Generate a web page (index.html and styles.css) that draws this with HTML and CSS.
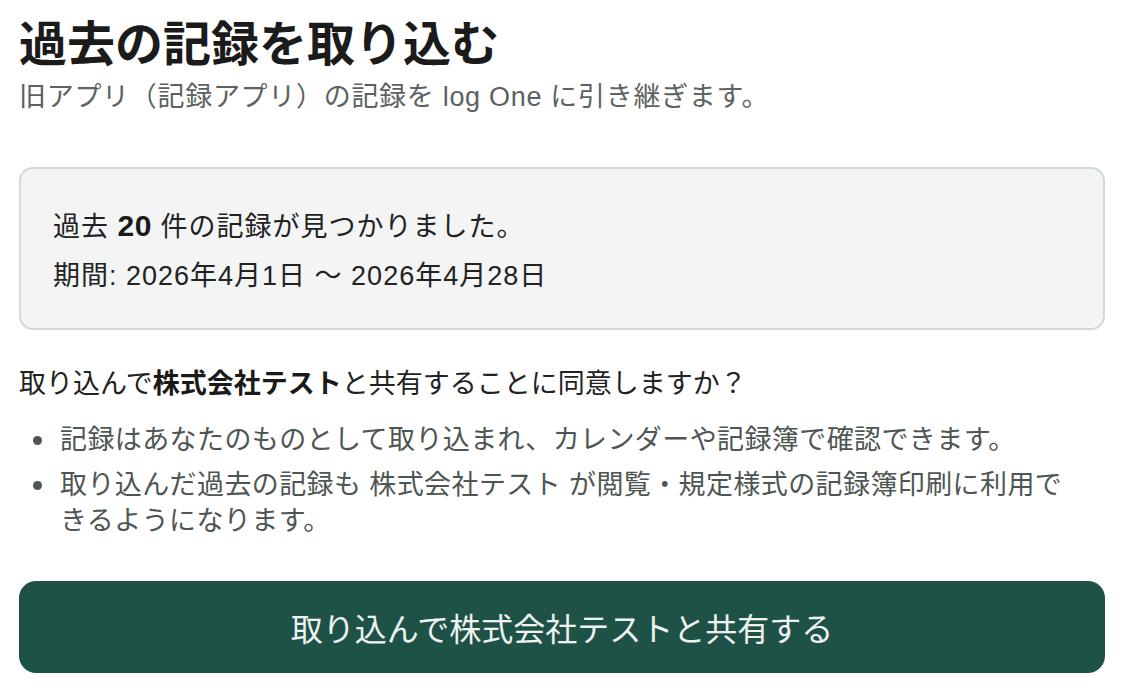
FILE: index.html
```html
<!DOCTYPE html>
<html lang="ja">
<head>
<meta charset="utf-8">
<title>過去の記録を取り込む</title>
<link rel="stylesheet" href="styles.css">
</head>
<body>
<main class="page">
  <h1 class="title">過去の記録を取り込む</h1>
  <p class="subtitle">旧アプリ（記録アプリ）の記録を log One に引き継ぎます。</p>

  <section class="summary">
    <p class="summary-line">過去 <strong class="count">20</strong> 件の記録が見つかりました。</p>
    <p class="summary-line">期間: 2026年4月1日 ～ 2026年4月28日</p>
  </section>

  <p class="question">取り込んで<strong>株式会社テスト</strong>と共有することに同意しますか？</p>

  <ul class="notes">
    <li class="note">記録はあなたのものとして取り込まれ、カレンダーや記録簿で確認できます。</li>
    <li class="note">取り込んだ過去の記録も 株式会社テスト が閲覧・規定様式の記録簿印刷に利用できるようになります。</li>
  </ul>

  <button class="primary" type="button">取り込んで株式会社テストと共有する</button>
</main>
</body>
</html>
```

FILE: styles.css
```css
* { box-sizing: border-box; }

html, body {
  margin: 0;
  padding: 0;
  background: #ffffff;
}

body {
  font-family: "Liberation Sans", "Noto Sans CJK JP", sans-serif;
  color: #222222;
}

.page {
  display: flex;
  flex-direction: column;
  padding: 12px 19px 0 19px;
}

.title {
  margin: 0;
  font-family: "Noto Sans CJK JP", sans-serif;
  font-size: 48px;
  line-height: 56px;
  font-weight: 700;
  color: #1b1b1b;
}

.subtitle {
  margin: 11px 0 0 0;
  font-size: 27px;
  line-height: 36px;
  letter-spacing: 0.7px;
  color: #5b625f;
}

.summary {
  margin-top: 52px;
  background: #f3f5f4;
  border: 2px solid #d2d9d6;
  border-radius: 14px;
  padding: 39px 32px 34px 32px;
  display: flex;
  flex-direction: column;
  gap: 13px;
}

.summary-line {
  margin: 0;
  font-size: 27px;
  line-height: 36px;
  letter-spacing: 1px;
  color: #222222;
}

.count {
  font-weight: 700;
  font-size: 30px;
  letter-spacing: 0.5px;
  color: #1a1a1a;
}

.question {
  margin: 36px 0 0 0;
  font-size: 27px;
  line-height: 36px;
  color: #222222;
}

.question strong {
  font-weight: 700;
  color: #1a1a1a;
}

.notes {
  margin: 20px 0 0 0;
  padding: 0 30px 0 41px;
  list-style: none;
  display: flex;
  flex-direction: column;
  gap: 9px;
}

.note {
  position: relative;
  font-size: 27px;
  line-height: 36px;
  letter-spacing: 0.4px;
  color: #4e5653;
}

.note::before {
  content: "";
  position: absolute;
  left: -27px;
  top: 14px;
  width: 9px;
  height: 9px;
  border-radius: 50%;
  background: #4e5653;
}

.primary {
  margin-top: 42px;
  height: 92px;
  width: 100%;
  border: none;
  border-radius: 17px;
  background: #1f5246;
  color: #eef3f1;
  font-family: "Noto Sans CJK JP", sans-serif;
  font-size: 32px;
  font-weight: 400;
  cursor: pointer;
}
```
